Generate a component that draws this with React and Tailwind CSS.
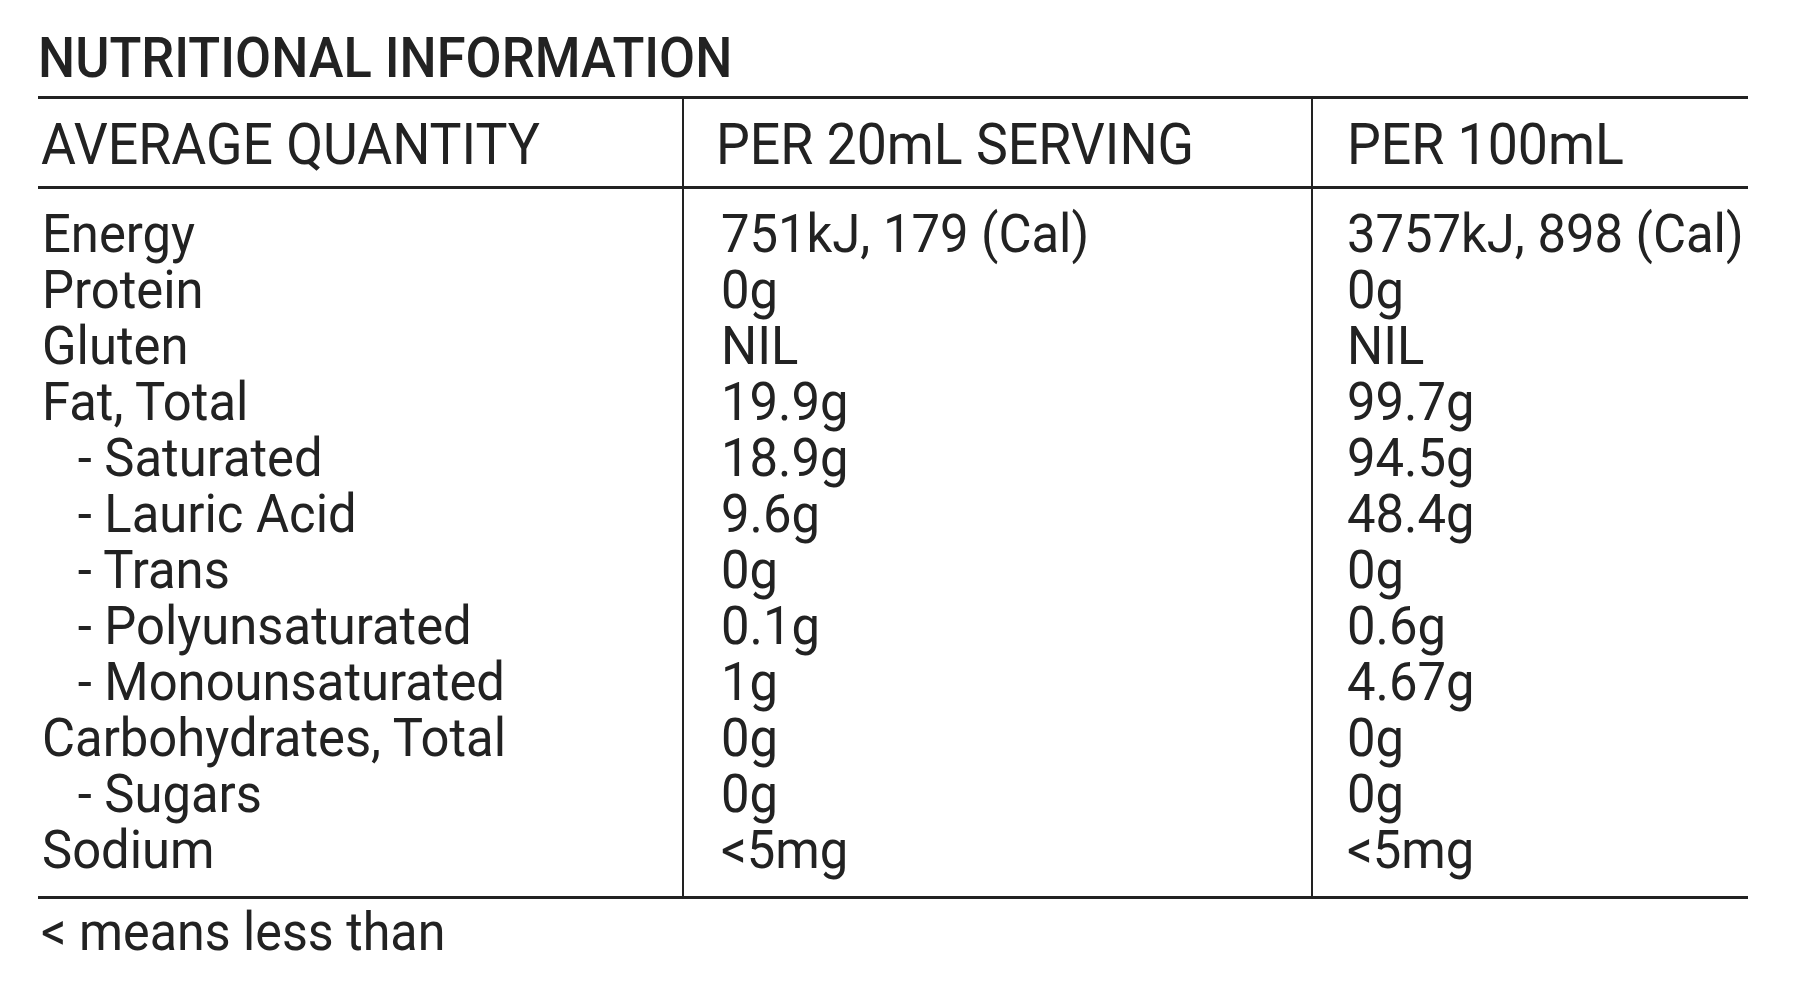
import React from "react";

const rows = [
  ["Energy", "751kJ, 179 (Cal)", "3757kJ, 898 (Cal)", false],
  ["Protein", "0g", "0g", false],
  ["Gluten", "NIL", "NIL", false],
  ["Fat, Total", "19.9g", "99.7g", false],
  ["- Saturated", "18.9g", "94.5g", true],
  ["- Lauric Acid", "9.6g", "48.4g", true],
  ["- Trans", "0g", "0g", true],
  ["- Polyunsaturated", "0.1g", "0.6g", true],
  ["- Monounsaturated", "1g", "4.67g", true],
  ["Carbohydrates, Total", "0g", "0g", false],
  ["- Sugars", "0g", "0g", true],
  ["Sodium", "<5mg", "<5mg", false],
];

export default function App() {
  return (
    <div
      className="min-h-screen w-full bg-white text-[#222222]"
      style={{ fontFamily: "Roboto, 'Noto Sans', sans-serif" }}
    >
      <div className="ml-[38px] w-[1710px]">
        <h1 className="mt-[31px] mb-[10px] text-[55px] leading-[55px] font-medium whitespace-nowrap">
          <span className="inline-block origin-left scale-x-[0.952]">NUTRITIONAL INFORMATION</span>
        </h1>

        <div className="border-t-[3px] border-b-[3px] border-[#222222]">
          {/* header */}
          <div className="flex h-[90px] border-b-[3px] border-[#222222] text-[57px] leading-[57px] whitespace-nowrap">
            <div className="w-[646px] shrink-0 border-r-2 border-[#222222] pt-[17px] pl-[3px]">
              <div className="origin-left scale-x-[0.94]">AVERAGE QUANTITY</div>
            </div>
            <div className="w-[629px] shrink-0 border-r-2 border-[#222222] pt-[17px] pl-[32px]">
              <div className="origin-left scale-x-[0.94]">PER 20mL SERVING</div>
            </div>
            <div className="min-w-0 flex-1 pt-[17px] pl-[34px]">
              <div className="origin-left scale-x-[0.94]">PER 100mL</div>
            </div>
          </div>

          {/* body */}
          <div className="flex text-[54px] leading-[56px] whitespace-nowrap">
            <div className="w-[646px] shrink-0 border-r-2 border-[#222222] pt-[17px] pb-[18px] pl-[4px]">
              <div className="origin-left scale-x-[0.94]">
                {rows.map((r, i) => (
                  <div key={i} className={r[3] ? "pl-[38px]" : ""}>
                    {r[0]}
                  </div>
                ))}
              </div>
            </div>
            <div className="w-[629px] shrink-0 border-r-2 border-[#222222] pt-[17px] pb-[18px] pl-[37px]">
              <div className="origin-left scale-x-[0.94]">
                {rows.map((r, i) => (
                  <div key={i}>{r[1]}</div>
                ))}
              </div>
            </div>
            <div className="min-w-0 flex-1 pt-[17px] pb-[18px] pl-[34px]">
              <div className="origin-left scale-x-[0.94]">
                {rows.map((r, i) => (
                  <div key={i}>{r[2]}</div>
                ))}
              </div>
            </div>
          </div>
        </div>

        <div className="mt-[5px] pl-[3px] text-[54px] leading-[56px] whitespace-nowrap">
          <div className="origin-left scale-x-[0.93]">&lt; means less than</div>
        </div>
      </div>
    </div>
  );
}
